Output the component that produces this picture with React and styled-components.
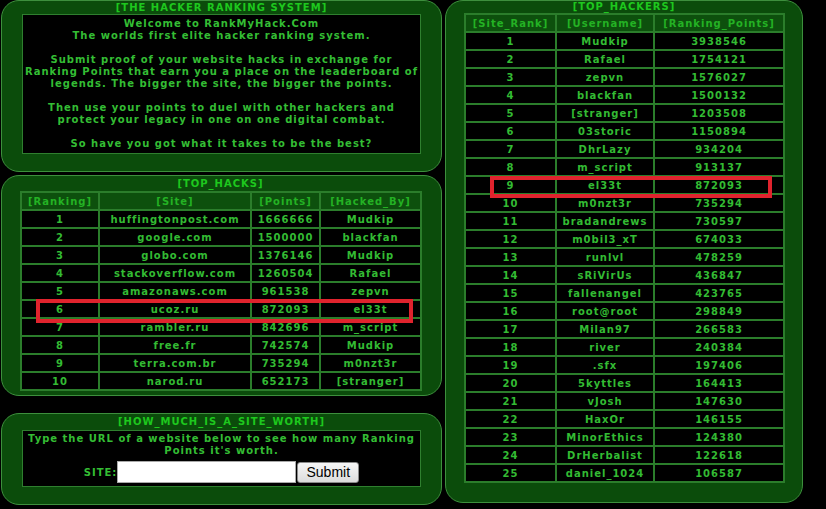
import React from "react";
import styled, { createGlobalStyle } from "styled-components";

const Global = createGlobalStyle`
  html, body { margin: 0; padding: 0; background: #000; }
  body { font-family: "DejaVu Sans", Verdana, sans-serif; }
`;

const Page = styled.div`
  position: relative;
  width: 826px;
  height: 509px;
  overflow: hidden;
  background: #000;
  display: flex;
  align-items: flex-start;
  gap: 3px;
  padding-left: 1px;
  box-sizing: border-box;
`;

const Column = styled.div`
  display: flex;
  flex-direction: column;
  width: ${(p) => p.$w}px;
`;

const Panel = styled.section`
  box-sizing: border-box;
  background: #0b4c0b;
  border: 1px solid #3d8f3d;
  border-radius: 18px;
  padding: 0 ${(p) => p.$pr ?? 20}px ${(p) => p.$pb ?? 20}px ${(p) => p.$pl ?? 20}px;
  margin-top: ${(p) => p.$mt ?? 0}px;
  height: ${(p) => (p.$h ? `${p.$h}px` : "auto")};
`;

const Title = styled.div`
  height: ${(p) => p.$h ?? 13}px;
  line-height: ${(p) => p.$h ?? 13}px;
  text-align: center;
  color: #1ec81e;
  font-size: 10px;
  font-weight: bold;
  letter-spacing: 1px;
  white-space: nowrap;
`;

const BlackBox = styled.div`
  background: #000;
  border: 1px solid #2f7f2f;
  color: #34bd34;
  font-size: 10px;
  font-weight: bold;
  letter-spacing: 1px;
  line-height: 12px;
  text-align: center;
  padding: ${(p) => p.$pad};
`;

const Para = styled.p`
  margin: 0 0 12px;
  &:last-child { margin-bottom: 0; }
`;

const Table = styled.table`
  border-collapse: collapse;
  table-layout: fixed;
  width: ${(p) => p.$w}px;
  font-size: 10px;
  font-weight: bold;
  letter-spacing: 1px;
`;

const Th = styled.th`
  height: 16px;
  padding: 0;
  border: 2px solid #2b7d2b;
  background: #0d500d;
  color: #24b224;
  font-weight: bold;
  text-align: center;
  white-space: nowrap;
`;

const Td = styled.td`
  height: 16px;
  padding: 0;
  border: 2px solid #2b7d2b;
  background: #000;
  color: #33bb33;
  text-align: center;
  white-space: nowrap;
`;

const FormRow = styled.div`
  display: flex;
  align-items: center;
  justify-content: center;
  margin-top: 4px;
`;

const Label = styled.span`
  margin-top: 2px;
`;

const Input = styled.input`
  box-sizing: border-box;
  width: 179px;
  height: 22px;
  border: 1px solid #a9a9a9;
  background: #fff;
  margin: 0;
`;

const Button = styled.button`
  box-sizing: border-box;
  width: 62px;
  height: 21px;
  margin: 0 0 0 1px;
  padding: 0;
  border: 1px solid #8a8a8a;
  border-radius: 3px;
  background: linear-gradient(#f6f6f6, #dcdcdc);
  font-family: "Liberation Sans", Arial, sans-serif;
  font-size: 14px;
  color: #000;
  letter-spacing: 0;
  font-weight: normal;
`;

const Highlight = styled.div`
  position: absolute;
  box-sizing: border-box;
  border: 4px solid #e0232d;
  pointer-events: none;
`;

const hacks = [
  [1, "huffingtonpost.com", 1666666, "Mudkip"],
  [2, "google.com", 1500000, "blackfan"],
  [3, "globo.com", 1376146, "Mudkip"],
  [4, "stackoverflow.com", 1260504, "Rafael"],
  [5, "amazonaws.com", 961538, "zepvn"],
  [6, "ucoz.ru", 872093, "el33t"],
  [7, "rambler.ru", 842696, "m_script"],
  [8, "free.fr", 742574, "Mudkip"],
  [9, "terra.com.br", 735294, "m0nzt3r"],
  [10, "narod.ru", 652173, "[stranger]"],
];

const hackers = [
  ["Mudkip", 3938546],
  ["Rafael", 1754121],
  ["zepvn", 1576027],
  ["blackfan", 1500132],
  ["[stranger]", 1203508],
  ["03storic", 1150894],
  ["DhrLazy", 934204],
  ["m_script", 913137],
  ["el33t", 872093],
  ["m0nzt3r", 735294],
  ["bradandrews", 730597],
  ["m0bil3_xT", 674033],
  ["runlvl", 478259],
  ["sRiVirUs", 436847],
  ["fallenangel", 423765],
  ["root@root", 298849],
  ["Milan97", 266583],
  ["river", 240384],
  [".sfx", 197406],
  ["5kyttles", 164413],
  ["vJosh", 147630],
  ["HaxOr", 146155],
  ["MinorEthics", 124380],
  ["DrHerbalist", 122618],
  ["daniel_1024", 106587],
];

export default function App() {
  return (
    <>
      <Global />
      <Page>
        <Column $w={441}>
          <Panel $h={172}>
            <Title $h={13}>[THE HACKER RANKING SYSTEM]</Title>
            <BlackBox $pad="3px 0 3px">
              <Para>
                Welcome to RankMyHack.Com
                <br />
                The worlds first elite hacker ranking system.
              </Para>
              <Para>
                Submit proof of your website hacks in exchange for
                <br />
                Ranking Points that earn you a place on the leaderboard of
                <br />
                legends. The bigger the site, the bigger the points.
              </Para>
              <Para>
                Then use your points to duel with other hackers and
                <br />
                protect your legacy in one on one digital combat.
              </Para>
              <Para>So have you got what it takes to be the best?</Para>
            </BlackBox>
          </Panel>

          <Panel $mt={3} $h={221} $pb={4} $pl={18}>
            <Title $h={15}>[TOP_HACKS]</Title>
            <Table $w={400}>
              <colgroup>
                <col style={{ width: 78 }} />
                <col style={{ width: 152 }} />
                <col style={{ width: 69 }} />
                <col style={{ width: 101 }} />
              </colgroup>
              <thead>
                <tr>
                  <Th>[Ranking]</Th>
                  <Th>[Site]</Th>
                  <Th>[Points]</Th>
                  <Th>[Hacked_By]</Th>
                </tr>
              </thead>
              <tbody>
                {hacks.map((r) => (
                  <tr key={r[0]}>
                    <Td>{r[0]}</Td>
                    <Td>{r[1]}</Td>
                    <Td>{r[2]}</Td>
                    <Td>{r[3]}</Td>
                  </tr>
                ))}
              </tbody>
            </Table>
          </Panel>

          <Panel $mt={17} $h={92}>
            <Title $h={16}>[HOW_MUCH_IS_A_SITE_WORTH]</Title>
            <BlackBox $pad="2px 0 3px">
              Type the URL of a website below to see how many Ranking
              <br />
              Points it's worth.
              <FormRow>
                <Label>SITE:</Label>
                <Input type="text" />
                <Button type="button">Submit</Button>
              </FormRow>
            </BlackBox>
          </Panel>
        </Column>

        <Column $w={358}>
          <Panel $h={503} $pr={18} $pl={18}>
            <Title $h={12}>[TOP_HACKERS]</Title>
            <Table $w={319}>
              <colgroup>
                <col style={{ width: 91 }} />
                <col style={{ width: 98 }} />
                <col style={{ width: 130 }} />
              </colgroup>
              <thead>
                <tr>
                  <Th>[Site_Rank]</Th>
                  <Th>[Username]</Th>
                  <Th>[Ranking_Points]</Th>
                </tr>
              </thead>
              <tbody>
                {hackers.map((r, i) => (
                  <tr key={r[0]}>
                    <Td>{i + 1}</Td>
                    <Td>{r[0]}</Td>
                    <Td>{r[1]}</Td>
                  </tr>
                ))}
              </tbody>
            </Table>
          </Panel>
        </Column>

        <Highlight style={{ left: 36, top: 299, width: 377, height: 24 }} />
        <Highlight style={{ left: 490, top: 176, width: 282, height: 22 }} />
      </Page>
    </>
  );
}
